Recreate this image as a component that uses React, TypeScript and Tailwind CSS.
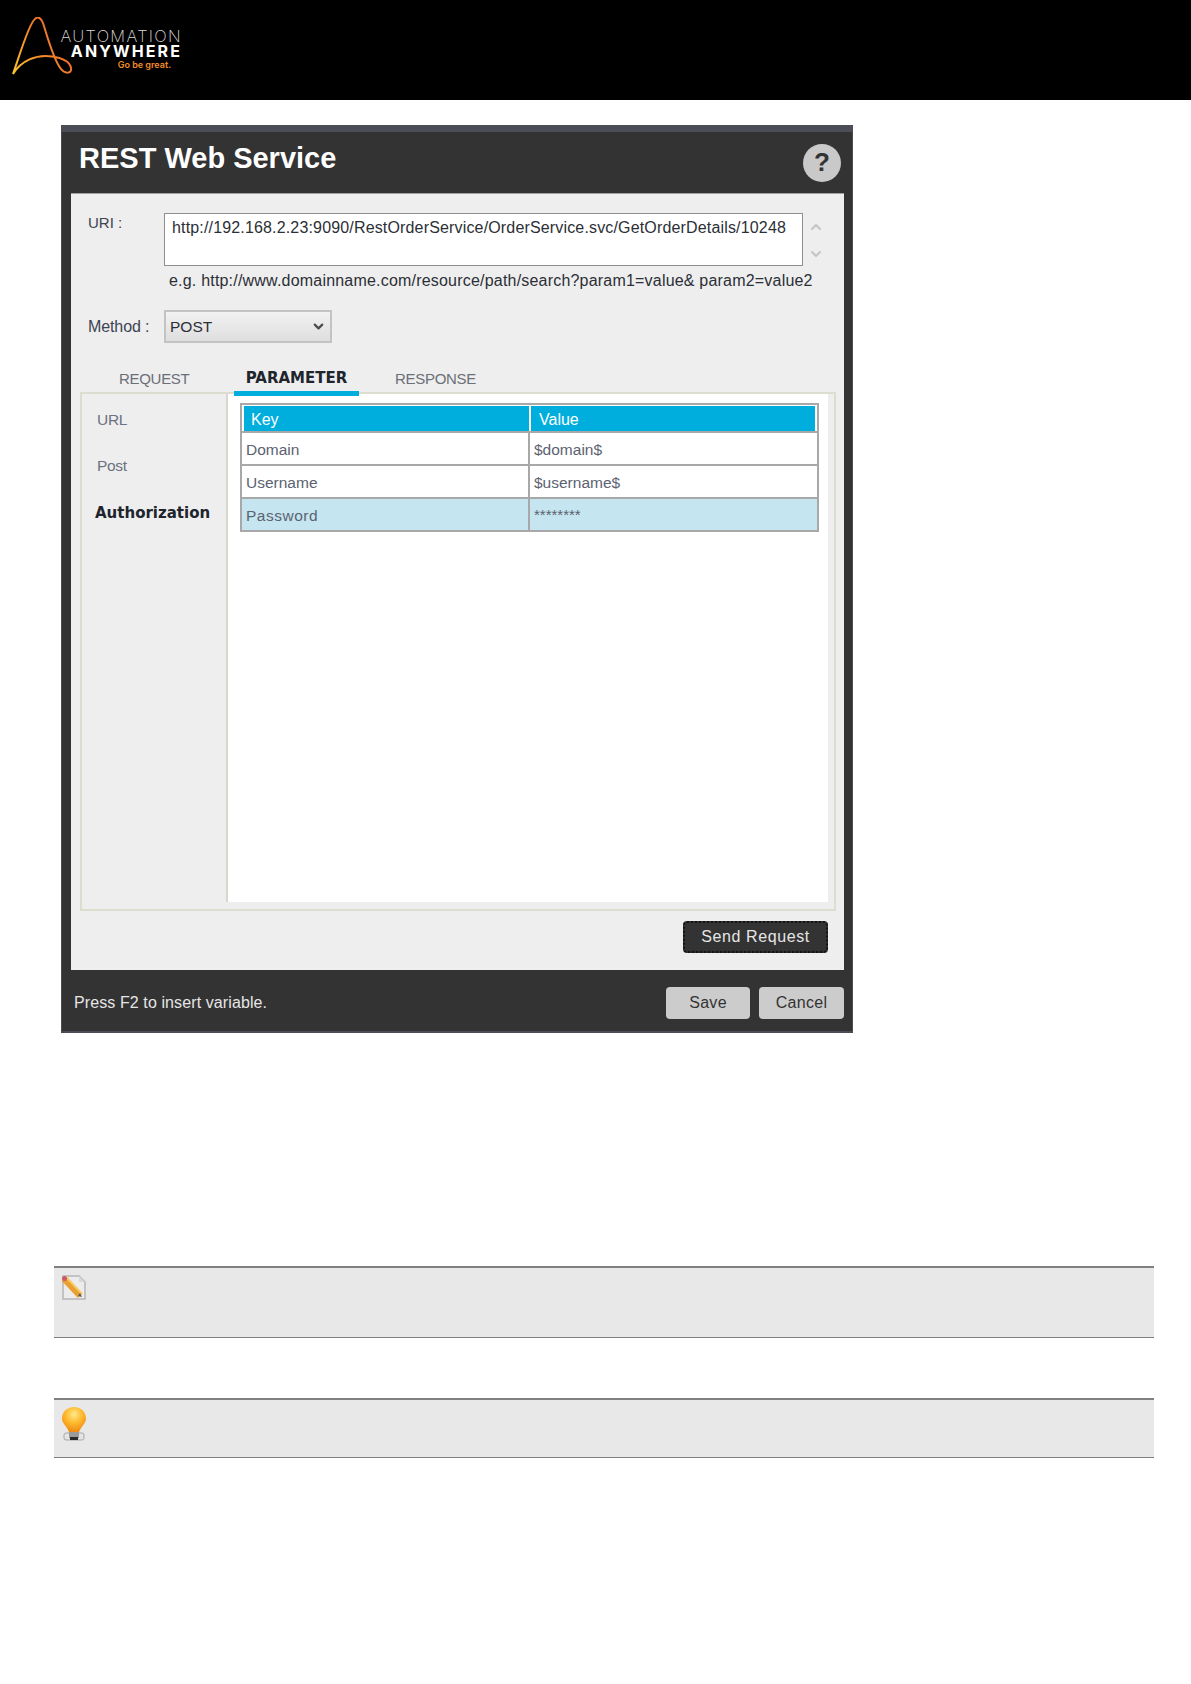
import { ChevronDown, ChevronUp } from "lucide-react";

const sideItems = ["URL", "Post"];

const rows = [
	{ key: "Domain", value: "$domain$", selected: false },
	{ key: "Username", value: "$username$", selected: false },
	{ key: "Password", value: "********", selected: true },
];

function Logo() {
	return (
		<div className="flex items-start pt-[17px] pl-[12px]">
			<svg width="62" height="60" viewBox="0 0 62 60" fill="none" className="shrink-0">
				<defs>
					<linearGradient id="logoGrad" x1="0" y1="1" x2="1" y2="0.4">
						<stop offset="0" stopColor="#fbc531" />
						<stop offset="0.5" stopColor="#f58a2a" />
						<stop offset="1" stopColor="#e8602c" />
					</linearGradient>
				</defs>
				<path
					d="M1 57 C7 40 17 6 23 2 C26 -1 29 1 31 6 C36 22 42 44 49 52 C53 57 60 57 59 51 C58 45 50 41 40 39.500 C24 37 9 44 1 57 Z"
					stroke="url(#logoGrad)"
					strokeWidth="2"
				/>
			</svg>
			<div className="-ml-[11px] flex w-[119px] shrink-0 flex-col items-end font-['Inter',sans-serif]">
				<div className="mt-[11px] text-[16.500px] leading-[16px] font-extralight tracking-[1.3px] text-[#d8d8d8]">
					AUTOMATION
				</div>
				<div className="text-[16px] leading-[15px] font-bold tracking-[2.1px] text-white">ANYWHERE</div>
				<div className="mr-[11px] text-[9px] leading-[11px] font-semibold text-[#f28c28]">Go be great.</div>
			</div>
		</div>
	);
}

function Dialog() {
	return (
		<div className="ml-[61px] h-[908px] w-[792px] border-x-[1px] border-b-[2px] border-[#4a4d55] bg-[#333333] font-['Liberation_Sans',sans-serif]">
			<div className="h-[7px] bg-[#4b4e57]" />
			<div className="flex h-[61px] items-center justify-between pr-[11px] pl-[17px]">
				<h1 className="pb-[8px] text-[29px] font-bold text-white">REST Web Service</h1>
				<div className="flex h-[38px] w-[38px] items-center justify-center rounded-full bg-[#c9c9c9] text-[26px] font-bold text-[#333333]">
					?
				</div>
			</div>

			<div className="ml-[9px] flex h-[777px] w-[773px] flex-col border-t-[1px] border-[#a0a0a0] bg-[#eeeeee] text-[#333333]">
				<div className="flex pt-[19px]">
					<div className="w-[93px] pt-[1px] pl-[17px] text-[15px] leading-[18px] text-[#3c4452]">URI :</div>
					<div className="h-[53px] w-[639px] border-[1px] border-[#8f8f8f] bg-white pt-[4px] pl-[7px] text-[16px] leading-[20px] tracking-[0.16px] text-[#2c2f36]">
						http://192.168.2.23:9090/RestOrderService/OrderService.svc/GetOrderDetails/10248
					</div>
					<div className="ml-[5px] flex flex-col pt-[6px] text-[#c4c4c4]">
						<ChevronUp size={16} strokeWidth={3} />
						<ChevronDown size={16} strokeWidth={3} className="mt-[11px]" />
					</div>
				</div>
				<div className="mt-[5px] ml-[98px] text-[16px] leading-[20px] tracking-[0.2px] text-[#2c2f36]">
					e.g. http://www.domainname.com/resource/path/search?param1=value&amp; param2=value2
				</div>

				<div className="mt-[19px] flex items-center">
					<div className="w-[93px] pl-[17px] text-[16px] tracking-[-0.1px] text-[#3c4452]">Method :</div>
					<div className="flex h-[33px] w-[168px] items-center justify-between border-[2px] border-[#c3c3c3] bg-gradient-to-b from-[#f2f2f2] to-[#dedede] pr-[4px] pl-[4px] text-[15.500px] text-[#2c2f36]">
						POST
						<ChevronDown size={15} strokeWidth={3.500} className="text-[#4b4b4b]" />
					</div>
				</div>

				<div className="mt-[20px] flex h-[33px] items-start pl-[48px] text-[15px]">
					<div className="mt-[5px] w-[115px] tracking-[-0.3px] text-[#6b6f78]">REQUEST</div>
					<div className="relative z-10 h-[33px] w-[125px] border-b-[5px] border-[#00aede] pt-[4px] text-center font-['DejaVu_Sans',sans-serif] text-[15px] font-bold tracking-[0px] text-[#20242c]">
						PARAMETER
					</div>
					<div className="mt-[5px] ml-[36px] tracking-[-0.3px] text-[#6b6f78]">RESPONSE</div>
				</div>

				<div className="-mt-[4px] ml-[9px] flex h-[519px] w-[756px] border-[2px] border-[#dcdccf] bg-[#eeeeee]">
					<div className="mb-[7px] flex w-[146px] shrink-0 flex-col border-r-[2px] border-[#d8d8d0] pt-[17px]">
						{sideItems.map((item) => (
							<div key={item} className="h-[46px] pl-[15px] text-[15.500px] leading-[18px] tracking-[-0.3px] text-[#6b7280]">
								{item}
							</div>
						))}
						<div className="pl-[13px] font-['DejaVu_Sans',sans-serif] text-[15px] leading-[20px] font-bold tracking-[0px] text-[#20242c]">
							Authorization
						</div>
					</div>
					<div className="mr-[6px] mb-[7px] flex-1 bg-white pt-[9px] pl-[12px]">
						<div className="w-[579px] border-[2px] border-[#a8a8a8] border-b-0">
							<div className="flex h-[26px] border-x-[2px] border-t-[1px] border-white bg-[#00aede] text-[16px] leading-[28px] text-white">
								<div className="w-[285px] pl-[7px]">Key</div>
								<div className="border-l-[2px] border-white pl-[8px]">Value</div>
							</div>
							{rows.map((row) => (
								<div
									key={row.key}
									className={
										row.selected
											? "flex h-[35px] border-t-[2px] border-b-[2px] border-[#a8a8a8] bg-[#c5e6f0] text-[15.500px] leading-[34px] tracking-[0.5px] text-[#5b6270]"
											: "flex h-[33px] border-t-[2px] border-[#a8a8a8] bg-white text-[15.500px] leading-[33px] text-[#5b6270]"
									}
								>
									<div className="w-[288px] border-r-[2px] border-[#a8a8a8] pl-[4px]">{row.key}</div>
									<div className={row.selected ? "pl-[4px] text-[15px] leading-[31px] tracking-[0px]" : "pl-[4px]"}>{row.value}</div>
								</div>
							))}
						</div>
					</div>
				</div>

				<div className="mt-[10px] flex justify-end pr-[16px]">
					<div className="flex h-[32px] w-[145px] items-center justify-center rounded-[4px] border-[2px] border-dotted border-[#111111] bg-[#333333] text-[16px] tracking-[0.6px] text-[#e6e6e6]">
						Send Request
					</div>
				</div>
			</div>

			<div className="ml-[3px] flex h-[63px] w-[779px] items-center justify-between pt-[2px]">
				<div className="ml-[9px] text-[16px] tracking-[0.1px] text-[#e6e6e6]">Press F2 to insert variable.</div>
				<div className="flex gap-[9px]">
					<div className="flex h-[32px] w-[84px] items-center justify-center rounded-[4px] bg-[#cccccc] text-[16px] tracking-[0.3px] text-[#333333]">
						Save
					</div>
					<div className="flex h-[32px] w-[85px] items-center justify-center rounded-[4px] bg-[#cccccc] text-[16px] tracking-[0.3px] text-[#333333]">
						Cancel
					</div>
				</div>
			</div>
		</div>
	);
}

function NoteIcon() {
	return (
		<svg width="24" height="25" viewBox="0 0 24 25">
			<path d="M1 1 H17 L23 7 V24 H1 Z" fill="#ececec" stroke="#b5b5b5" strokeWidth="1.500" />
			<path d="M17 1 V7 H23" fill="#d8d8d8" />
			<path d="M2 4 L18 21" stroke="#e8a030" strokeWidth="6" />
			<path d="M4 2 L20 19" stroke="#f8c860" strokeWidth="2" />
			<path d="M18 18 L20 22 L16 21 Z" fill="#555555" />
			<circle cx="2.500" cy="3.500" r="2.500" fill="#c85a6a" />
		</svg>
	);
}

function BulbIcon() {
	return (
		<svg width="26" height="36" viewBox="0 0 26 36">
			<defs>
				<radialGradient id="bulbGrad" cx="0.5" cy="0.3" r="0.7">
					<stop offset="0" stopColor="#ffe98a" />
					<stop offset="0.5" stopColor="#fdb92e" />
					<stop offset="1" stopColor="#f08a10" />
				</radialGradient>
			</defs>
			<path d="M13 1 C6 1 1 6 1 12.500 C1 18 6 20 8 26 H18 C20 20 25 18 25 12.500 C25 6 20 1 13 1 Z" fill="url(#bulbGrad)" />
			<rect x="3" y="27" width="20" height="7" rx="2" fill="#e4e4e4" stroke="#a8a8a8" />
			<rect x="8" y="26" width="10" height="6" fill="#9a9a9a" />
			<rect x="9" y="31" width="8" height="3" fill="#2a2a2a" />
		</svg>
	);
}

export default function App() {
	return (
		<div className="h-[1684px] w-[1191px] overflow-hidden bg-white">
			<div className="h-[100px] bg-black">
				<Logo />
			</div>
			<div className="pt-[25px]">
				<Dialog />
			</div>
			<div className="mt-[233px] ml-[54px] h-[72px] w-[1100px] border-t-[2px] border-b-[1px] border-t-[#808080] border-b-[#808080] bg-[#e8e8e8] pt-[7px] pl-[8px]">
				<NoteIcon />
			</div>
			<div className="mt-[60px] ml-[54px] h-[60px] w-[1100px] border-t-[2px] border-b-[1px] border-t-[#808080] border-b-[#808080] bg-[#e8e8e8] pt-[6px] pl-[7px]">
				<BulbIcon />
			</div>
		</div>
	);
}
